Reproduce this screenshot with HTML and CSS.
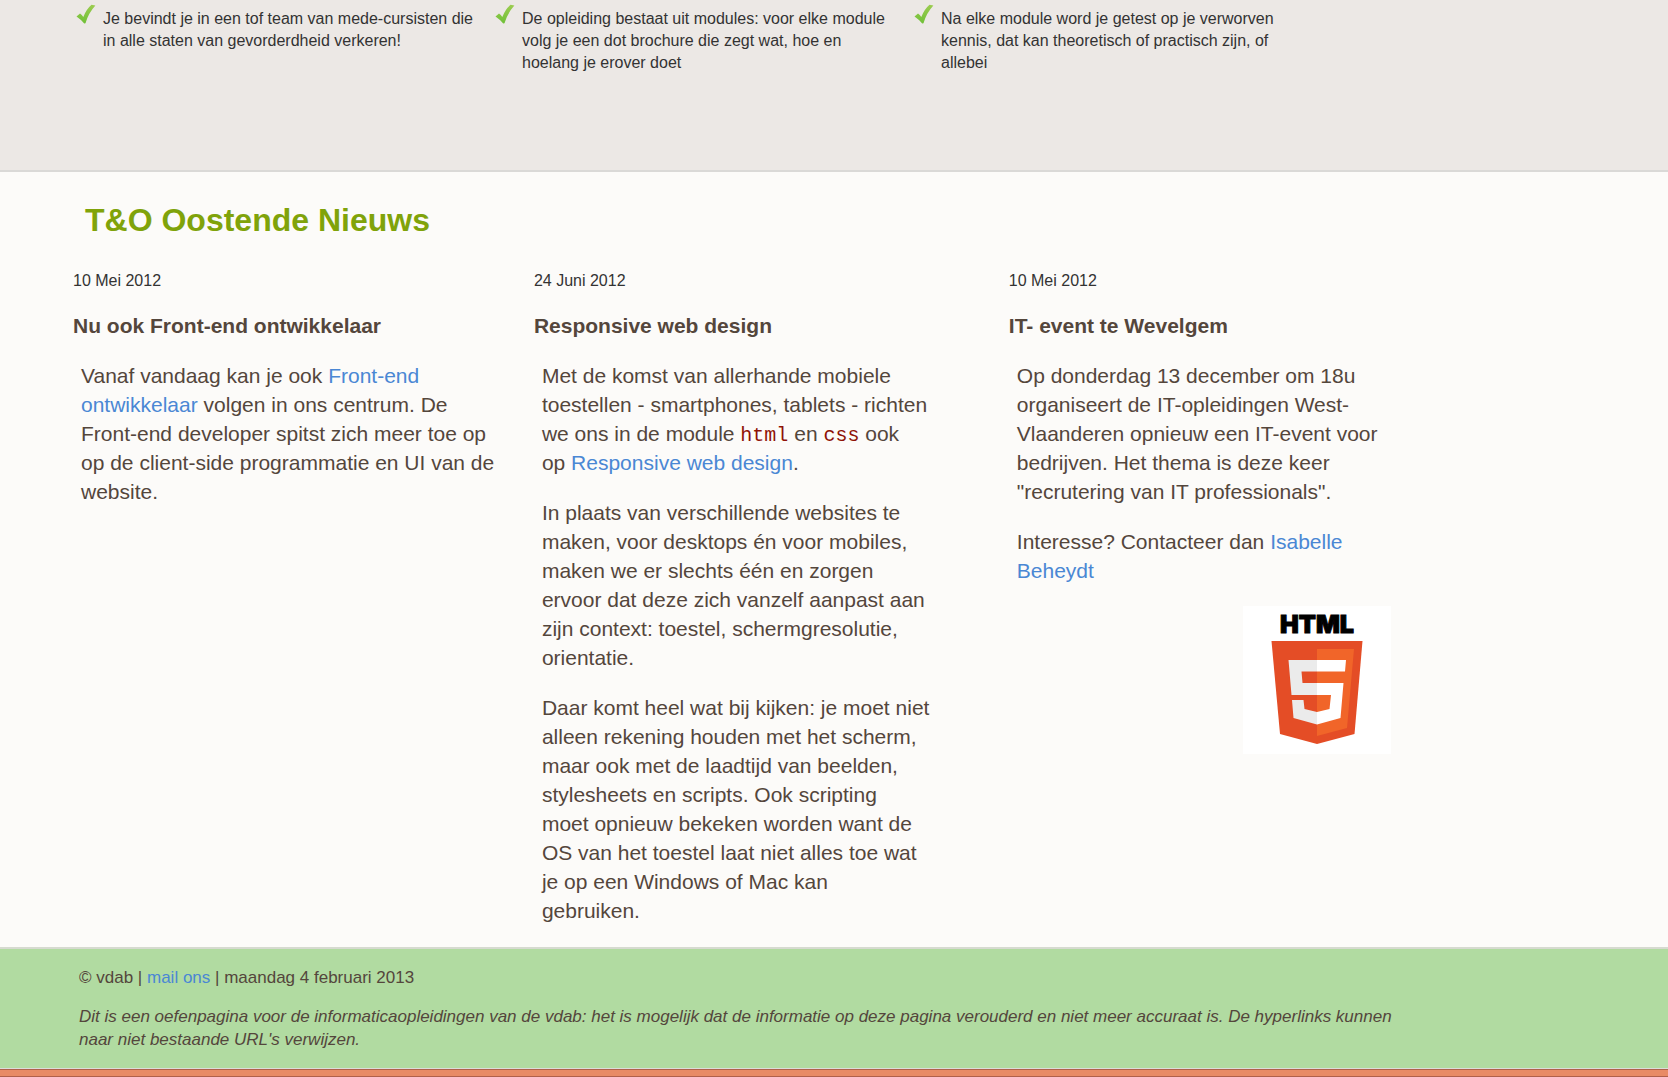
FILE: index.html
```html
<!DOCTYPE html>
<html lang="nl">
<head>
<meta charset="utf-8">
<title>T&amp;O Oostende</title>
<link rel="stylesheet" href="styles.css">
</head>
<body>
<svg class="sprite" aria-hidden="true">
  <defs>
    <linearGradient id="leaf" x1="0" y1="0" x2="0" y2="1"><stop offset="0" stop-color="#9ccc50"/><stop offset="1" stop-color="#70c038"/></linearGradient>
    <symbol id="check" viewBox="0 0 20 20"><path fill="url(#leaf)" d="M0.500 12.500 L4 9.500 Q6 10.600 7.300 13 Q10.500 5 15.500 0.800 L19.400 1.600 Q12.500 9 9.500 19.300 L8.200 19.500 Q5 15.500 0.500 12.500Z"/></symbol>
  </defs>
</svg>
<section class="features">
  <ul class="feature-list">
    <li><svg class="check" aria-hidden="true"><use href="#check"/></svg><p>Je bevindt je in een tof team van mede-cursisten die in alle staten van gevorderdheid verkeren!</p></li>
    <li><svg class="check" aria-hidden="true"><use href="#check"/></svg><p>De opleiding bestaat uit modules: voor elke module volg je een dot brochure die zegt wat, hoe en hoelang je erover doet</p></li>
    <li><svg class="check" aria-hidden="true"><use href="#check"/></svg><p>Na elke module word je getest op je verworven kennis, dat kan theoretisch of practisch zijn, of allebei</p></li>
  </ul>
</section>
<main class="news">
  <h2>T&amp;O Oostende Nieuws</h2>
  <div class="articles">
    <article>
      <time datetime="2012-05-10">10 Mei 2012</time>
      <h3>Nu ook Front-end ontwikkelaar</h3>
      <div class="body">
        <p>Vanaf vandaag kan je ook <a href="#">Front-end ontwikkelaar</a> volgen in ons centrum. De Front-end developer spitst zich meer toe op op de client-side programmatie en UI van de website.</p>
      </div>
    </article>
    <article>
      <time datetime="2012-06-24">24 Juni 2012</time>
      <h3>Responsive web design</h3>
      <div class="body">
        <p>Met de komst van allerhande mobiele toestellen - smartphones, tablets - richten we ons in de module <code>html</code> en <code>css</code> ook op&nbsp;<a href="#">Responsive web design</a>.</p>
        <p>In plaats van verschillende websites te maken, voor desktops én voor mobiles, maken we er slechts één en zorgen ervoor dat deze zich vanzelf aanpast aan zijn context: toestel, schermgresolutie, orientatie.</p>
        <p>Daar komt heel wat bij kijken: je moet niet alleen rekening houden met het scherm, maar ook met de laadtijd van beelden, stylesheets en scripts. Ook scripting moet&nbsp;opnieuw bekeken worden want de OS van het toestel laat niet alles toe wat je op een Windows of Mac kan<br>gebruiken.</p>
      </div>
    </article>
    <article>
      <time datetime="2012-05-10">10 Mei 2012</time>
      <h3>IT- event te Wevelgem</h3>
      <div class="body">
        <p>Op donderdag 13 december om 18u organiseert de IT-opleidingen West-Vlaanderen opnieuw een IT-event voor bedrijven. Het thema is deze keer "recrutering van IT professionals".</p>
        <p>Interesse? Contacteer dan <a href="#">Isabelle Beheydt</a></p>
      </div>
      <svg class="html5" viewBox="0 0 148 148" role="img" aria-label="HTML5">
        <rect width="148" height="148" fill="#fff"/>
        <text class="html5-name" x="74" y="27" text-anchor="middle">HTML</text>
        <path fill="#e44d26" d="M28.500 35h91l-8 93-37.500 10-37-10z"/>
        <path fill="#f16529" d="M74 43h37l-7 79-30 8z"/>
        <path fill="#ebebeb" d="M74 54H45.500l3 35H74V77H59.500l-1-11.500H74zM74 106l-12.500-3-1-9H49l1.500 18L74 118.500z"/>
        <path fill="#fff" d="M74 54h29l-1 11.500H74zM74 77h26.500l-3 35L74 118.500V106l12.500-3 1.500-14H74z"/>
      </svg>
    </article>
  </div>
</main>
<footer class="footer">
  <div class="footer-inner">
    <p>© vdab | <a href="#">mail ons</a> | maandag 4 februari 2013</p>
    <p class="notice">Dit is een oefenpagina voor de informaticaopleidingen van de vdab: het is mogelijk dat de informatie op deze pagina verouderd en niet meer accuraat is. De hyperlinks kunnen naar niet bestaande URL's verwijzen.</p>
  </div>
</footer>
<div class="base-bar"></div>
</body>
</html>
```
FILE: styles.css
```css
* { box-sizing: border-box; }
body {
  margin: 0;
  font: 16px/22px "Liberation Sans", Arial, sans-serif;
  color: #333;
  background: #fcfbf9;
}
p, h2, h3, ul { margin: 0; }
a { color: #4a87d4; text-decoration: none; }
.sprite { position: absolute; width: 0; height: 0; }

.features {
  padding: 8px 0 96px;
  background: #ece8e5;
  border-bottom: 2px solid #dad9d7;
}
.feature-list {
  display: grid;
  grid-template-columns: repeat(3, 1fr);
  column-gap: 6px;
  width: 75%;
  margin-left: 76px;
  padding: 0;
  list-style: none;
}
.feature-list li { display: flex; gap: 7px; padding-right: 10px; }
.check { flex: none; width: 20px; height: 20px; margin-top: -4px; }

.news { width: 79%; margin-left: 73px; padding: 28px 0 22px; }
h2 { padding-left: 12px; font-size: 32px; line-height: 40px; color: #80a30a; }
.articles {
  display: grid;
  grid-template-columns: 461fr 475fr 382fr;
  padding-top: 30px;
}
.articles article { display: flex; flex-direction: column; }
.articles article:nth-child(1) { padding-right: 33px; }
.articles article:nth-child(2) { padding-right: 77px; }
h3 { margin: 19px 0 21px; font-size: 21px; line-height: 29px; color: #54463c; }
.body { display: grid; gap: 21px; padding-left: 8px; font-size: 21px; line-height: 29px; color: #54463c; }
code { font: 20px/20px "Liberation Mono", monospace; color: #8f1206; }
.html5 { align-self: flex-end; width: 148px; height: 148px; margin-top: 21px; }
.html5-name { font: 900 25px Inter, sans-serif; fill: #000; stroke: #000; stroke-width: 1px; }

.footer {
  padding: 17px 0;
  background: #b1dba1;
  border-top: 2px solid #d6dad0;
  border-bottom: 1px solid #dcdcda;
  font-size: 17px;
  line-height: 23px;
  color: #54463c;
}
.footer-inner { display: grid; gap: 16px; width: 80%; margin-left: 79px; }
.notice { font-style: italic; }
.base-bar { height: 8px; background: #e88b66; border: solid #b0604a; border-width: 1px 0; }
```
